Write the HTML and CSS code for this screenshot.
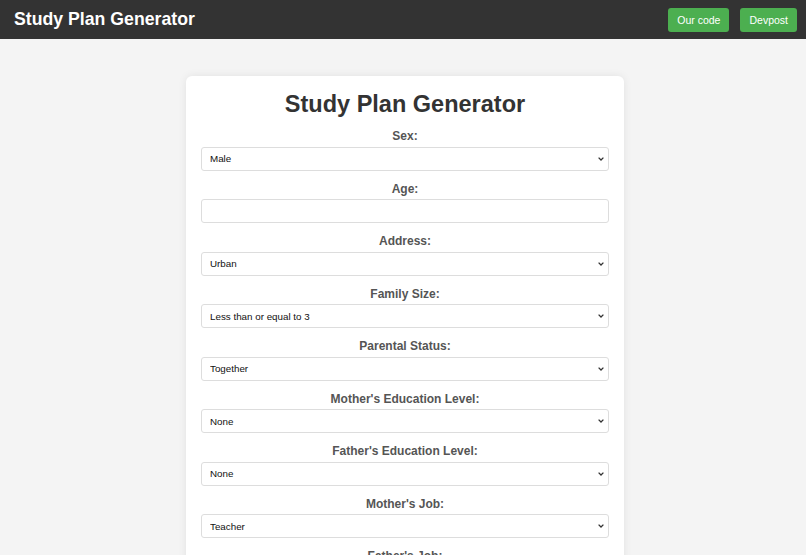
FILE: index.html
```html
<!DOCTYPE html>
<html lang="en">
<head>
  <meta charset="UTF-8">
  <meta name="viewport" content="width=device-width, initial-scale=1.0">
  <title>Study Plan Generator</title>
  <link rel="stylesheet" href="styles.css">
</head>
<body>
  <!-- Top bar -->
  <header class="topbar">
    <div class="brand">Study Plan Generator</div>
    <nav class="links">
      <a class="link-btn" href="#">Our code</a>
      <a class="link-btn" href="#">Devpost</a>
    </nav>
  </header>

  <main class="page">
    <form class="card" id="plan-form">
      <h1>Study Plan Generator</h1>

      <label for="sex">Sex:</label>
      <select id="sex">
        <option>Male</option>
        <option>Female</option>
      </select>

      <label for="age">Age:</label>
      <input type="number" id="age">

      <label for="address">Address:</label>
      <select id="address">
        <option>Urban</option>
        <option>Rural</option>
      </select>

      <label for="famsize">Family Size:</label>
      <select id="famsize">
        <option>Less than or equal to 3</option>
        <option>Greater than 3</option>
      </select>

      <label for="pstatus">Parental Status:</label>
      <select id="pstatus">
        <option>Together</option>
        <option>Apart</option>
      </select>

      <label for="medu">Mother's Education Level:</label>
      <select id="medu">
        <option>None</option>
        <option>Primary</option>
        <option>Secondary</option>
        <option>Higher</option>
      </select>

      <label for="fedu">Father's Education Level:</label>
      <select id="fedu">
        <option>None</option>
        <option>Primary</option>
        <option>Secondary</option>
        <option>Higher</option>
      </select>

      <label for="mjob">Mother's Job:</label>
      <select id="mjob">
        <option>Teacher</option>
        <option>Health</option>
        <option>Services</option>
        <option>At home</option>
        <option>Other</option>
      </select>

      <label for="fjob">Father's Job:</label>
      <select id="fjob">
        <option>Teacher</option>
        <option>Health</option>
        <option>Services</option>
        <option>At home</option>
        <option>Other</option>
      </select>
    </form>
  </main>
</body>
</html>
```

FILE: styles.css
```css
/* Basic Reset */
* {
  margin: 0;
  padding: 0;
  box-sizing: border-box;
}

body {
  background-color: #f4f4f4;
  font-family: "Liberation Sans", Arial, Helvetica, sans-serif;
  color: #333;
}

/* Top bar */
.topbar {
  height: 39px;
  background-color: #333;
  display: flex;
  align-items: center;
  justify-content: space-between;
  padding: 0 9px 0 14px;
}

.brand {
  color: #fff;
  font-size: 17.7px;
  font-weight: bold;
}

.links {
  display: flex;
  gap: 11px;
}

.link-btn {
  display: block;
  height: 24px;
  line-height: 24px;
  padding: 0 9px;
  background-color: #4caf50;
  color: #fff;
  font-size: 10.5px;
  text-decoration: none;
  border-radius: 3px;
}

/* Form card */
.page {
  display: flex;
  justify-content: center;
  padding: 37px 0 0 4px;
}

.card {
  width: 438px;
  background-color: #fff;
  border-radius: 6px;
  box-shadow: 0 0 8px rgba(0, 0, 0, 0.08);
  padding: 15px 15px 20px;
}

.card h1 {
  text-align: center;
  font-size: 23.5px;
  line-height: 27.5px;
  color: #333;
  margin-bottom: 10.5px;
}

.card label {
  display: block;
  text-align: center;
  font-size: 12px;
  line-height: 14px;
  font-weight: bold;
  color: #555;
  margin-bottom: 3.5px;
}

.card select,
.card input {
  display: block;
  width: 100%;
  height: 24px;
  border: 1px solid #ddd;
  border-radius: 3px;
  background-color: #fff;
  font-family: "Liberation Sans", Arial, sans-serif;
  font-size: 9.8px;
  color: #111;
  padding: 0 6px;
  margin-bottom: 11px;
}

/* small chevron like the native one */
.card select {
  appearance: none;
  padding: 0 20px 0 8px;
  background-image: url("data:image/svg+xml,%3Csvg xmlns='http://www.w3.org/2000/svg' width='6' height='4' viewBox='0 0 6 4'%3E%3Cpath d='M0.6 0.6 L3 3 L5.4 0.6' fill='none' stroke='%23333' stroke-width='1.3'/%3E%3C/svg%3E");
  background-repeat: no-repeat;
  background-position: right 4px center;
  background-size: 6px 4px;
}
```
